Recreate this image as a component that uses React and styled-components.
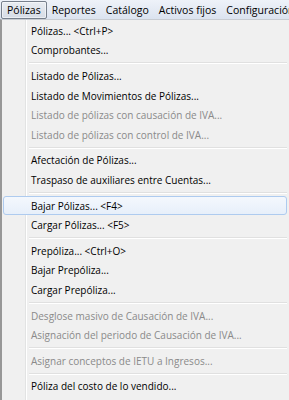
import React from "react";
import styled, { createGlobalStyle } from "styled-components";

const GlobalStyle = createGlobalStyle`
  html, body { margin: 0; padding: 0; background: #f0f0f0; }
  body {
    font-family: "Open Sans", "Noto Sans", "DejaVu Sans", sans-serif;
    font-size: 10.5px;
    color: #000;
    overflow: hidden;
  }
`;

const Screen = styled.div`
  width: 289px;
  height: 400px;
  overflow: hidden;
  background: #f0f0f0;
`;

const MenuBar = styled.div`
  display: flex;
  align-items: center;
  height: 19px;
  padding-left: 1px;
  background: linear-gradient(to bottom, #eef2f9 0%, #e3e9f3 60%, #dbe3ef 100%);
  white-space: nowrap;
  font-size: 10.5px;
`;

const MenuTitle = styled.div`
  display: flex;
  align-items: center;
  height: 16px;
  padding: 0 ${(p) => (p.$active ? 5 : 4)}px;
  border: 1px solid ${(p) => (p.$active ? "#767f8c" : "transparent")};
  border-radius: 2px;
  background: ${(p) =>
    p.$active ? "linear-gradient(to bottom, #e8ecf2, #d6dce6)" : "transparent"};
  box-shadow: ${(p) => (p.$active ? "inset 0 0 0 1px rgba(255,255,255,0.5)" : "none")};
  flex-shrink: 0;
`;

const Dropdown = styled.div`
  border-left: 2px solid #979797;
  border-top: 1px solid #c8ccd2;
  padding: 1px 2px 2px 1px;
  height: 400px;
  font-size: 10px;
  background:
    linear-gradient(
      to right,
      transparent 23px,
      #e2e3e3 23px,
      #e2e3e3 24px,
      #ffffff 24px,
      #ffffff 25px,
      transparent 25px
    ),
    #f0f0f0;
`;

const Item = styled.div`
  box-sizing: border-box;
  height: 19.6px;
  display: flex;
  align-items: center;
  padding-left: 27px;
  white-space: nowrap;
  color: ${(p) => (p.$disabled ? "#8a8a8a" : "#000")};
  border: 1px solid ${(p) => (p.$hover ? "#aecbef" : "transparent")};
  border-radius: 3px;
  background: ${(p) =>
    p.$hover ? "linear-gradient(to bottom, #f4f8fd, #e7effa)" : "transparent"};
`;

const Separator = styled.div`
  height: 6px;
  margin-left: 26px;
  display: flex;
  flex-direction: column;
  justify-content: center;
  &::before {
    content: "";
    display: block;
    height: 1px;
    background: #e0e0e0;
  }
  &::after {
    content: "";
    display: block;
    height: 1px;
    background: #ffffff;
  }
`;

const titles = ["Pólizas", "Reportes", "Catálogo", "Activos fijos", "Configuración"];

const groups = [
  [
    { t: "Pólizas... <Ctrl+P>" },
    { t: "Comprobantes..." },
  ],
  [
    { t: "Listado de Pólizas..." },
    { t: "Listado de Movimientos de Pólizas..." },
    { t: "Listado de pólizas con causación de IVA...", d: true },
    { t: "Listado de pólizas con control de IVA...", d: true },
  ],
  [
    { t: "Afectación de Pólizas..." },
    { t: "Traspaso de auxiliares entre Cuentas..." },
  ],
  [
    { t: "Bajar Pólizas... <F4>", h: true },
    { t: "Cargar Pólizas... <F5>" },
  ],
  [
    { t: "Prepóliza... <Ctrl+O>" },
    { t: "Bajar Prepóliza..." },
    { t: "Cargar Prepóliza..." },
  ],
  [
    { t: "Desglose masivo de Causación de IVA...", d: true },
    { t: "Asignación del periodo de Causación de IVA...", d: true },
  ],
  [{ t: "Asignar conceptos de IETU a Ingresos...", d: true }],
  [{ t: "Póliza del costo de lo vendido..." }],
];

export default function App() {
  return (
    <Screen>
      <GlobalStyle />
      <MenuBar>
        {titles.map((t, i) => (
          <MenuTitle key={t} $active={i === 0}>
            {t}
          </MenuTitle>
        ))}
      </MenuBar>
      <Dropdown>
        {groups.map((g, gi) => (
          <React.Fragment key={gi}>
            {gi > 0 && <Separator />}
            {g.map((it) => (
              <Item key={it.t} $disabled={it.d} $hover={it.h}>
                {it.t}
              </Item>
            ))}
          </React.Fragment>
        ))}
      </Dropdown>
    </Screen>
  );
}
